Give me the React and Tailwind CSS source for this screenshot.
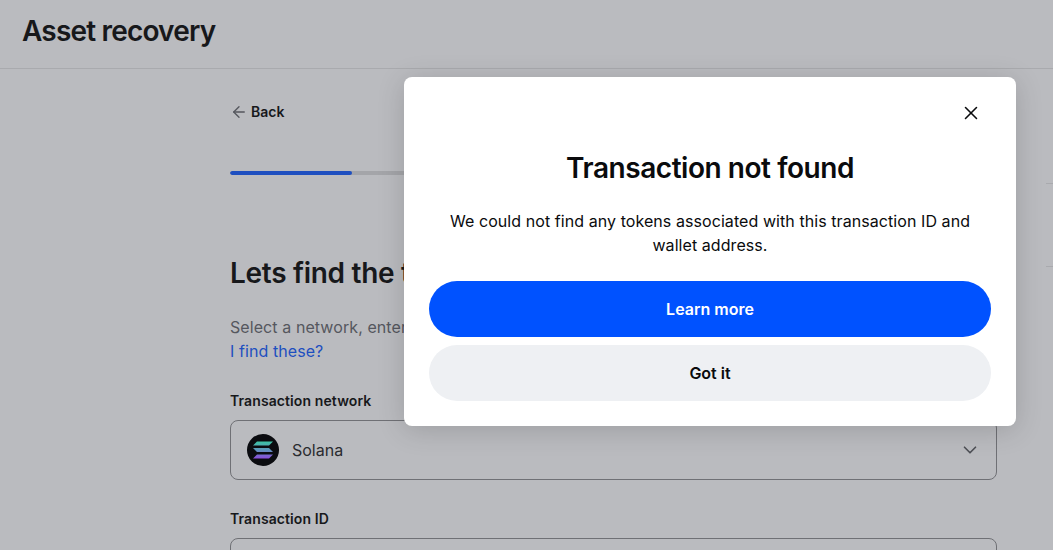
import React from "react";
import { ArrowLeft, ChevronDown, X } from "lucide-react";

// Solana coin drawn as three slanted bars on a dark disc
function SolanaIcon() {
  return (
    <svg width="32" height="32" viewBox="0 0 32 32" className="shrink-0">
      <defs>
        <linearGradient id="sol" x1="0" y1="0" x2="0" y2="1">
          <stop offset="0" stopColor="#3cc4a4" />
          <stop offset="0.5" stopColor="#5f95bc" />
          <stop offset="1" stopColor="#8b4bdc" />
        </linearGradient>
      </defs>
      <circle cx="16" cy="16" r="16" fill="#0b0c10" />
      <path
        d="M10 7.5h16l-4 4H6zM6 14h16l4 4H10zM10 20.5h16l-4 4H6z"
        fill="url(#sol)"
      />
    </svg>
  );
}

function App() {
  return (
    <div className="relative h-screen overflow-hidden bg-[#babbbf] font-['Inter',_'Liberation_Sans',sans-serif] text-[#17181b]">
      <header className="flex h-[69px] items-center border-b border-[#a9aaae] pl-[22px] pb-[7px]">
        <h1 className="text-[28px] leading-9 font-semibold tracking-[-0.82px]">
          Asset recovery
        </h1>
      </header>

      <div className="flex">
        <main className="ml-[230px] w-[767px] shrink-0">
          <div className="mt-[33px] flex h-5 items-center gap-[3px] text-sm font-semibold">
            <ArrowLeft size={18} strokeWidth={1.8} className="text-[#55575e]" />
            <span>Back</span>
          </div>

          <div className="mt-[49px] h-1 w-full overflow-hidden rounded-full bg-[#a4a5a9]">
            <div className="h-full w-[122px] rounded-full bg-[#1e4fc0]" />
          </div>

          <h2 className="mt-[80px] text-[28px] leading-9 font-semibold tracking-[-0.3px]">
            Lets find the tokens
          </h2>

          <p className="mt-[24px] text-base leading-6 tracking-[0.08px] text-[#55575e]">
            Select a network, enter
            <br />
            <span className="text-[#1e4fc0]">I find these?</span>
          </p>

          <label className="mt-[28px] block text-sm leading-5 font-semibold tracking-[0.1px]">
            Transaction network
          </label>
          <div className="mt-[9px] flex h-[60px] items-center rounded-lg border border-[#6f7075] pr-[15px] pl-4">
            <SolanaIcon />
            <span className="ml-[13px] text-base text-[#2a2b2f]">Solana</span>
            <ChevronDown size={22} strokeWidth={1.8} className="ml-auto text-[#4d4f55]" />
          </div>

          <label className="mt-[29px] block text-sm leading-5 font-semibold tracking-[0.1px]">
            Transaction ID
          </label>
          <div className="mt-[9px] h-[60px] rounded-lg border border-[#6f7075]" />
        </main>

        {/* edge of the side column, cut off by the window */}
        <aside className="mt-[114px] ml-[49px] h-[84px] flex-1 border-y border-[#a9aaae]" />
      </div>

      <div className="absolute top-[77px] left-[404px] w-[612px] rounded-lg bg-white px-[25px] pt-[73px] pb-[25px] text-[#0a0b0d] shadow-[0_4px_28px_rgba(0,0,0,0.16)]">
        <X size={22} strokeWidth={1.7} className="absolute top-[25px] right-[34px]" />
        <h2 className="text-center text-[28px] leading-9 font-semibold tracking-[-0.45px]">
          Transaction not found
        </h2>
        <p className="mx-auto mt-[23px] w-[540px] text-center text-base leading-6 tracking-[0.07px]">
          We could not find any tokens associated with this transaction ID and wallet address.
        </p>
        <div className="mt-6 flex flex-col gap-2">
          <button className="h-14 rounded-full bg-[#0052ff] text-base font-semibold text-white">
            Learn more
          </button>
          <button className="h-14 rounded-full bg-[#eef0f3] text-base font-semibold">
            Got it
          </button>
        </div>
      </div>
    </div>
  );
}

export default App;
